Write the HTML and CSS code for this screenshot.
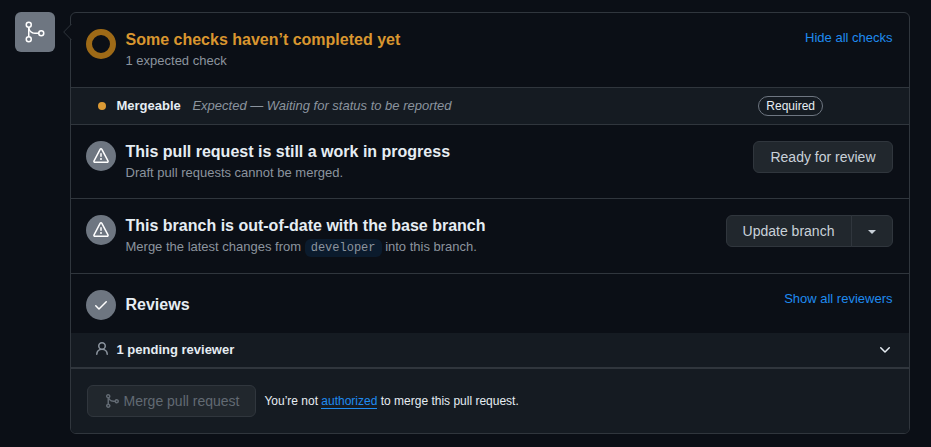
FILE: index.html
```html
<!DOCTYPE html>
<html lang="en">
<head>
<meta charset="utf-8">
<title>Pull request checks</title>
<link rel="stylesheet" href="styles.css">
</head>
<body>
<main class="merge">
  <div class="avatar">
    <svg width="24" height="24" viewBox="0 0 24 24" fill="currentColor"><path fill-rule="evenodd" d="M5.75 21a1.75 1.75 0 110-3.5 1.75 1.75 0 010 3.5zM2.5 19.25a3.25 3.25 0 106.5 0 3.25 3.25 0 00-6.5 0zM5.75 6.5a1.75 1.75 0 110-3.5 1.75 1.75 0 010 3.5zM2.5 4.75a3.25 3.25 0 106.5 0 3.25 3.25 0 00-6.5 0zM18.25 15a1.75 1.75 0 110-3.5 1.75 1.75 0 010 3.5zM15 13.25a3.25 3.25 0 106.5 0 3.25 3.25 0 00-6.5 0z"/><path fill-rule="evenodd" d="M6.5 7.25c0 2.9 2.35 5.25 5.25 5.25h4.5V14h-4.5A6.75 6.75 0 015 7.25h1.5z"/><path fill-rule="evenodd" d="M5.75 16.75A.75.75 0 006.5 16V8A.75.75 0 005 8v8c0 .414.336.75.75.75z"/></svg>
  </div>
  <div class="box">
    <svg class="caret" width="9" height="18" viewBox="0 0 9 18"><path class="caret-fill" d="M9 0.5L0.7 9L9 17.5z"/><path class="caret-line" d="M8.5 1L0.7 9L8.5 17"/></svg>
    <section class="item item-checks">
      <span class="ring"></span>
      <div class="copy"><h3 class="title pending">Some checks haven’t completed yet</h3><p class="note">1 expected check</p></div>
      <a class="toggle">Hide all checks</a>
    </section>
    <div class="status">
      <span class="dot"></span>
      <strong class="name">Mergeable</strong>
      <em class="detail">Expected — Waiting for status to be reported</em>
      <span class="label">Required</span>
    </div>
    <section class="item item-draft">
      <span class="circle"><svg width="16" height="16" viewBox="0 0 16 16" fill="currentColor"><path fill-rule="evenodd" d="M8.22 1.754a.25.25 0 00-.44 0L1.698 13.132a.25.25 0 00.22.368h12.164a.25.25 0 00.22-.368L8.22 1.754zm-1.763-.707c.659-1.234 2.427-1.234 3.086 0l6.082 11.378A1.75 1.75 0 0114.082 15H1.918a1.75 1.75 0 01-1.543-2.575L6.457 1.047zM9 11a1 1 0 11-2 0 1 1 0 012 0zm-.25-5.25a.75.75 0 00-1.5 0v2.5a.75.75 0 001.5 0v-2.5z"/></svg></span>
      <div class="copy"><h3 class="title">This pull request is still a work in progress</h3><p class="note">Draft pull requests cannot be merged.</p></div>
      <button class="btn ready">Ready for review</button>
    </section>
    <section class="item item-branch">
      <span class="circle"><svg width="16" height="16" viewBox="0 0 16 16" fill="currentColor"><path fill-rule="evenodd" d="M8.22 1.754a.25.25 0 00-.44 0L1.698 13.132a.25.25 0 00.22.368h12.164a.25.25 0 00.22-.368L8.22 1.754zm-1.763-.707c.659-1.234 2.427-1.234 3.086 0l6.082 11.378A1.75 1.75 0 0114.082 15H1.918a1.75 1.75 0 01-1.543-2.575L6.457 1.047zM9 11a1 1 0 11-2 0 1 1 0 012 0zm-.25-5.25a.75.75 0 00-1.5 0v2.5a.75.75 0 001.5 0v-2.5z"/></svg></span>
      <div class="copy"><h3 class="title">This branch is out-of-date with the base branch</h3><p class="note">Merge the latest changes from <code class="ref">developer</code> into this branch.</p></div>
      <div class="group"><button class="btn update">Update branch</button><button class="btn drop" aria-label="Update options"><span class="arrow"></span></button></div>
    </section>
    <section class="item item-reviews">
      <span class="circle"><svg width="16" height="16" viewBox="0 0 16 16" fill="currentColor"><path fill-rule="evenodd" d="M13.78 4.22a.75.75 0 010 1.06l-7.25 7.25a.75.75 0 01-1.06 0L2.22 9.28a.75.75 0 011.06-1.06L6 10.94l6.72-6.72a.75.75 0 011.06 0z"/></svg></span>
      <div class="copy"><h3 class="title">Reviews</h3></div>
      <a class="toggle">Show all reviewers</a>
    </section>
    <div class="reviewer">
      <svg class="person" width="16" height="16" viewBox="0 0 16 16" fill="currentColor"><path fill-rule="evenodd" d="M10.5 5a2.5 2.5 0 11-5 0 2.5 2.5 0 015 0zm.061 3.073a4 4 0 10-5.123 0 6.004 6.004 0 00-3.431 5.142.75.75 0 001.498.07 4.5 4.5 0 018.99 0 .75.75 0 101.498-.07 6.005 6.005 0 00-3.432-5.142z"/></svg>
      <strong class="name">1 pending reviewer</strong>
      <svg class="chevron" width="16" height="16" viewBox="0 0 16 16" fill="currentColor"><path fill-rule="evenodd" d="M12.78 6.22a.75.75 0 010 1.06l-4.25 4.25a.75.75 0 01-1.06 0L3.22 7.28a.75.75 0 011.06-1.06L8 9.94l3.72-3.72a.75.75 0 011.06 0z"/></svg>
    </div>
    <footer class="footer">
      <button class="btn merge-btn" disabled><svg width="16" height="16" viewBox="0 0 16 16" fill="currentColor"><path fill-rule="evenodd" d="M5 3.254V3.25v.005a.75.75 0 110-.005v.004zm.45 1.9a2.25 2.25 0 10-1.95.218v5.256a2.25 2.25 0 101.5 0V7.123A5.735 5.735 0 009.25 9h1.378a2.251 2.251 0 100-1.5H9.25a4.25 4.25 0 01-3.8-2.346zM12.75 9a.75.75 0 100-1.5.75.75 0 000 1.5zm-8.5 4.5a.75.75 0 100-1.5.75.75 0 000 1.5z"/></svg><span>Merge pull request</span></button>
      <p class="auth">You’re not <a class="auth-link">authorized</a> to merge this pull request.</p>
    </footer>
  </div>
</main>
</body>
</html>
```
FILE: styles.css
```css
* { box-sizing: border-box; }
body {
  margin: 0;
  height: 447px;
  overflow: hidden;
  background: #0b0f16;
  color: #e6edf3;
  font: 13px/20px "Liberation Sans", Arial, sans-serif;
}
h3, p { margin: 0; }
svg { display: block; flex: none; }
.merge { display: flex; gap: 15px; padding: 12px 21px 0 15px; }
.avatar {
  flex: none;
  display: flex;
  align-items: center;
  justify-content: center;
  width: 40px;
  height: 40px;
  border-radius: 6px;
  background: #6e7681;
  color: #fff;
}
.box {
  position: relative;
  flex: 1;
  height: 422px;
  border: 1px solid #30363d;
  border-radius: 6px;
}
.caret { position: absolute; left: -8px; top: 10px; }
.caret-fill { fill: #0b0f16; }
.caret-line { fill: none; stroke: #30363d; }
.item { display: flex; align-items: flex-start; padding: 16px 16.5px 0 15px; border-bottom: 1px solid #30363d; }
.item-checks { height: 75px; }
.item-draft { height: 74px; padding-right: 16px; }
.item-branch { height: 75px; padding-right: 16px; }
.item-reviews { height: 59px; border-bottom: 0; }
.ring { flex: none; width: 30px; height: 30px; border: 6px solid #9e6a17; border-radius: 50%; }
.circle {
  flex: none;
  display: flex;
  align-items: center;
  justify-content: center;
  width: 30px;
  height: 30px;
  border-radius: 50%;
  background: #6e7681;
  color: #fff;
}
.copy { flex: 1; padding-left: 9.5px; }
.title { font-size: 16px; line-height: 22px; font-weight: 700; }
.item-reviews .title { padding-top: 4px; }
.pending { color: #d9962f; }
.note { color: #8b949e; }
.toggle { color: #1f8bf0; line-height: 18px; }
.status { display: flex; align-items: center; height: 37px; padding: 0 86px 1px 27px; border-bottom: 1px solid #30363d; background: #151b22; }
.dot { width: 8px; height: 8px; margin-right: 10.5px; border-radius: 50%; background: #db9a35; }
.detail { margin-left: 11.6px; color: #8b949e; }
.label { margin-left: auto; padding: 0 7px; border: 1px solid #6e7681; border-radius: 10px; font-size: 12px; line-height: 18px; }
.btn {
  height: 32px;
  padding: 0 16px;
  border: 1px solid #30363d;
  border-radius: 6px;
  background: #21272d;
  color: #c9d1d9;
  font: 14px/20px "Liberation Sans", Arial, sans-serif;
  white-space: nowrap;
}
.ready { width: 140px; }
.group { display: flex; }
.update { width: 126px; padding: 0 16.5px 0 15.5px; border-radius: 6px 0 0 6px; }
.drop { display: flex; align-items: center; justify-content: center; width: 42px; margin-left: -1px; padding: 0; border-radius: 0 6px 6px 0; }
.arrow { margin-top: 2px; border: 4px solid transparent; border-top-color: currentColor; border-bottom: 0; }
.ref { padding: 2px 6px; border-radius: 6px; background: #0b1b2d; font: 12px "Liberation Mono", monospace; }
.reviewer { display: flex; align-items: center; height: 34px; padding: 0 16px 0 23px; background: #151b22; }
.person { margin: 0 6.5px 2px 0; color: #8b949e; }
.chevron { margin: 0 0 2px auto; }
.footer { display: flex; align-items: center; height: 66px; padding: 0 16px 0 16px; border-top: 2px solid #30363d; border-radius: 0 0 5px 5px; background: #151b22; }
.merge-btn { display: flex; align-items: center; gap: 3.5px; width: 169px; color: #626a73; }
.auth { margin-left: 8.4px; font-size: 12px; }
.auth-link { border-bottom: 1px solid #1f8bf0; color: #1f8bf0; }
```
